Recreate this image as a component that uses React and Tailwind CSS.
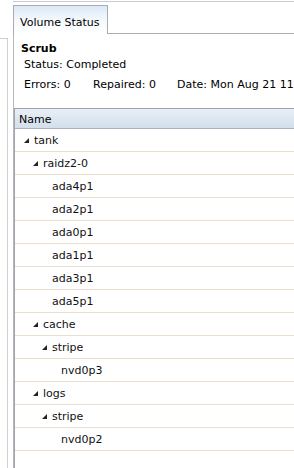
import React from "react";

const rows = [
  { name: "tank", level: 0, exp: true },
  { name: "raidz2-0", level: 1, exp: true },
  { name: "ada4p1", level: 2 },
  { name: "ada2p1", level: 2 },
  { name: "ada0p1", level: 2 },
  { name: "ada1p1", level: 2 },
  { name: "ada3p1", level: 2 },
  { name: "ada5p1", level: 2 },
  { name: "cache", level: 1, exp: true },
  { name: "stripe", level: 2, exp: true },
  { name: "nvd0p3", level: 3 },
  { name: "logs", level: 1, exp: true },
  { name: "stripe", level: 2, exp: true },
  { name: "nvd0p2", level: 3 },
];

function Expando() {
  return (
    <svg width="5" height="5" viewBox="0 0 5 5" className="block">
      <polygon points="5,0 5,5 0,5" fill="#222" />
    </svg>
  );
}

export default function App() {
  return (
    <div className="w-[294px] h-[468px] overflow-hidden bg-white flex font-['DejaVu_Sans',sans-serif] text-[11px] leading-[13px] text-black">
      <div className="w-[8px] shrink-0 pt-[38px] flex flex-col">
        <div className="flex-1 border-t border-r border-[#d0d0d0]" />
      </div>
      <div className="w-[5px] shrink-0" />
      <div className="flex-1 min-w-0 flex flex-col">
        <div className="h-[1px] mt-[1px] bg-[#c8ccd2]" />
        <div className="h-[3px]" />
        <div className="flex h-[29px] shrink-0">
          <div className="w-[95px] shrink-0 border-t border-l border-r border-[#a9acb2] bg-gradient-to-b from-[#dce8f6] via-[#f4f8fc] to-white pl-[6px] pt-[10px] whitespace-nowrap">
            Volume Status
          </div>
          <div className="flex-1 border-b border-[#a9acb2]" />
        </div>
        <div className="flex-1 border-l border-[#b4b8be] flex flex-col min-h-0">
          <div className="h-[74px] shrink-0 pt-[8px] whitespace-nowrap overflow-hidden">
            <div className="pl-[7px] font-bold">Scrub</div>
            <div className="pl-[10px] mt-[3px]">Status: Completed</div>
            <div className="pl-[10px] mt-[7px] flex">
              <span className="w-[69px] shrink-0">Errors: 0</span>
              <span className="w-[84px] shrink-0">Repaired: 0</span>
              <span className="shrink-0">Date: Mon Aug 21 11:00:12 2017</span>
            </div>
          </div>
          <div className="flex-1 border-l border-[#a2a5ab] flex flex-col min-h-0">
            <div className="h-[21px] shrink-0 border-t border-t-[#9da3ab] border-b border-b-[#aab3bd] bg-gradient-to-b from-[#e8eff7] to-[#d3dfeb] pl-[4px] pt-[4px]">
              Name
            </div>
            {rows.map((r, i) => (
              <div
                key={i}
                className="h-[23px] shrink-0 border-b border-[#ecdfd0] flex items-center whitespace-nowrap text-[#111]"
                style={{ paddingLeft: 9 + 9 * r.level }}
              >
                <div className="w-[10px] shrink-0 flex items-center">
                  {r.exp ? <Expando /> : null}
                </div>
                <span>{r.name}</span>
              </div>
            ))}
          </div>
        </div>
      </div>
    </div>
  );
}
